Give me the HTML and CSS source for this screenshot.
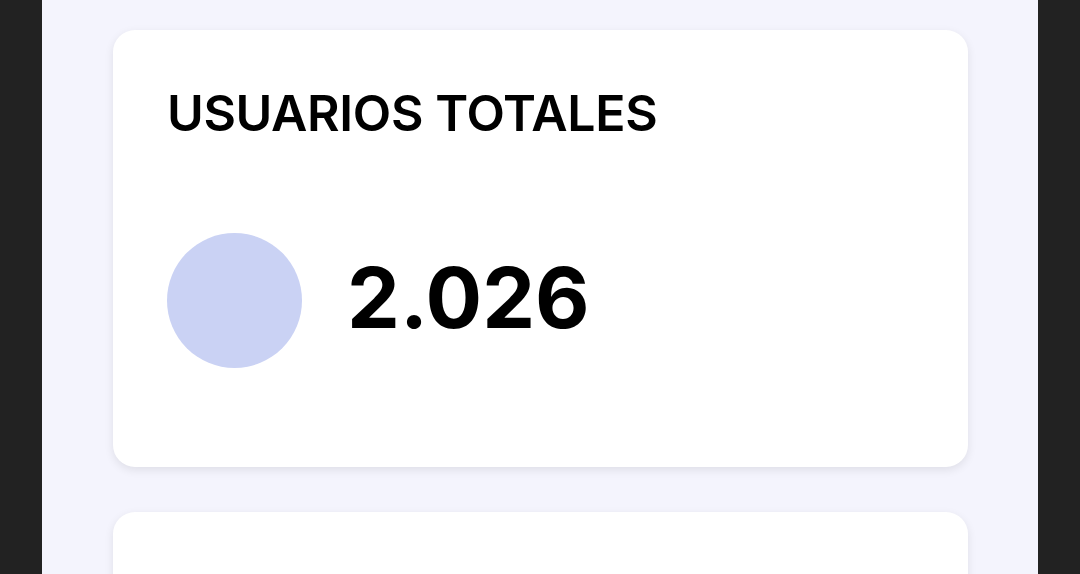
FILE: index.html
```html
<!DOCTYPE html>
<html lang="es">
<head>
    <meta charset="UTF-8">
    <meta name="viewport" content="width=device-width, initial-scale=1.0">
    <title>Panel</title>
    <link rel="stylesheet" href="styles.css">
</head>
<body>
    <div class="page">
        <div class="stat-card">
            <h2 class="stat-title">USUARIOS TOTALES</h2>
            <div class="stat-row">
                <div class="stat-dot"></div>
                <div class="stat-value">2.026</div>
            </div>
        </div>
        <div class="stat-card"></div>
    </div>
</body>
</html>
```

FILE: styles.css
```css
html, body {
    margin: 0;
    padding: 0;
    height: 100%;
    overflow: hidden;
}
body {
    font-family: Inter, "Noto Sans", sans-serif;
    background-color: #222222;
}
.page {
    margin: 0 42px;
    min-height: 100%;
    background-color: #f4f4fd;
    padding: 30px 70px 0 71px;
    box-sizing: border-box;
    display: flex;
    flex-direction: column;
    gap: 45px;
}
.stat-card {
    background-color: #fff;
    border-radius: 22px;
    box-shadow: 0 3px 10px rgba(0, 0, 0, 0.09);
    padding: 58px 54px 0 54px;
    height: 437px;
    box-sizing: border-box;
    flex-shrink: 0;
}
.stat-title {
    margin: 0;
    font-size: 50px;
    line-height: 1;
    font-weight: 600;
    letter-spacing: -0.35px;
    color: #000;
}
.stat-row {
    display: flex;
    align-items: center;
    gap: 45px;
    margin-top: 95px;
}
.stat-dot {
    width: 135px;
    height: 135px;
    border-radius: 50%;
    background-color: #cad2f4;
    flex-shrink: 0;
}
.stat-value {
    font-size: 84px;
    line-height: 1;
    font-weight: 700;
    color: #000;
    margin-bottom: 5px;
}
```
